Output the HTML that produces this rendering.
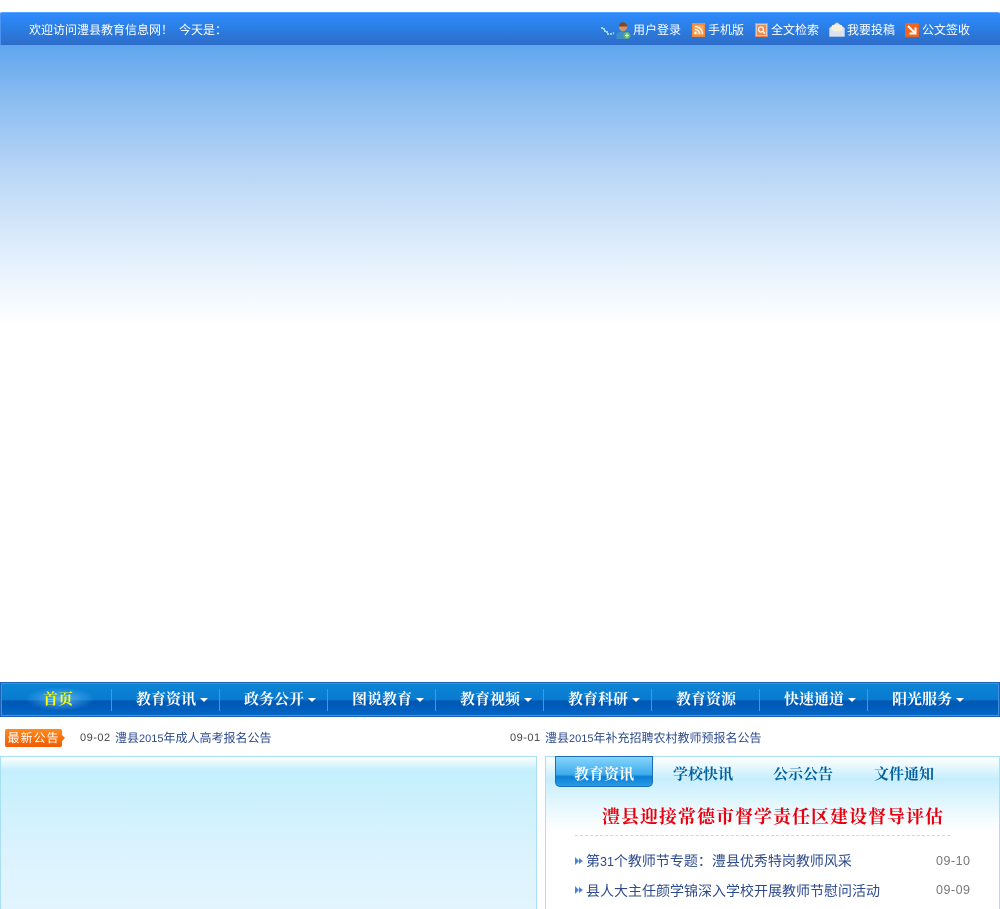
<!DOCTYPE html>
<html lang="zh"><head><meta charset="utf-8"><title>澧县教育信息网</title>
<style>
*{margin:0;padding:0;box-sizing:border-box}
html,body{width:1000px;height:909px;overflow:hidden;background:#fff}
body{position:relative;font:12px/16px "Liberation Sans","WenQuanYi Zen Hei","Noto Sans CJK SC",sans-serif;color:#333}
.a{position:absolute;white-space:nowrap}
#hero{left:0;top:45px;width:1000px;height:282px;background:linear-gradient(#5fa6ee 0,#8cbdf1 20%,#b9d6f6 45%,#dcebfb 70%,#f4f9fe 90%,#fff 100%)}
#top{left:0;top:12px;width:1000px;height:33px;background:linear-gradient(#2f8bff 0,#2b7fe6 45%,#2d6cc8 100%);border-top:1px solid #55a5ff;border-left:1px solid #4a95f0;border-radius:2px 2px 0 0}
.w{color:#fff}
#nav{left:0;top:682px;width:1000px;height:35px;border:1px solid #1e62b5;background:linear-gradient(#0a85d6 0,#0a7bd0 50%,#0056b4 55%,#0061be 85%,#0a6cc8 100%);box-shadow:inset 0 0 0 1px #3f90de}
#glow{left:25px;top:687px;width:70px;height:24px;background:radial-gradient(ellipse at center,rgba(110,195,255,.75),rgba(80,170,255,0) 70%)}
.n{top:691px;height:18px;font:bold 15px/18px "Liberation Serif","Noto Serif CJK SC",serif;color:#fff}
.sep{top:689px;width:1px;height:22px;background:#4f93dd}
.tri{top:698px;width:0;height:0;border-left:4px solid transparent;border-right:4px solid transparent;border-top:4px solid #fff}
#badge{left:5px;top:729px;width:57px;height:18px;background:linear-gradient(#ff8a1c,#f25a00);border-radius:2px;color:#fff;font:12px/18px "Liberation Sans","WenQuanYi Zen Hei",sans-serif;text-align:center;letter-spacing:1px}
#badgeT{left:62px;top:735px;border-left:3px solid #f5700a;border-top:3px solid transparent;border-bottom:3px solid transparent}
.d{font:11px/16px "Liberation Sans",sans-serif;letter-spacing:.5px;color:#444}
.m10{font-size:11px}
.b{color:#2c4a8c}
#left{left:0;top:756px;width:537px;height:153px;border:1px solid #a9dff3;border-bottom:0;background:linear-gradient(#fff 0,#c5effd 13px,#c7f0fd 25px,#dcf3fe 100px,#e2f5fe 153px)}
#right{left:545px;top:756px;width:455px;height:153px;border:1px solid #a9dff3;border-bottom:0;background:linear-gradient(#fff 0,#c6eefd 22px,#d5f3fd 35px,#f2fbfe 60px,#fff 75px)}
#tab{left:555px;top:756px;width:98px;height:31px;border:1px solid #1a6db8;border-top-width:1px;border-radius:0 0 5px 5px;background:linear-gradient(#86d5fb 0,#3eaaec 60%,#0a7fd4 68%,#2a9be6 100%)}
.t{top:766px;font:bold 15px/18px "Liberation Serif","Noto Serif CJK SC",serif;color:#00609f}
#h{left:602px;top:806px;font:bold 18px/22px "Liberation Serif","Noto Serif CJK SC",serif;color:#e8000e}
#dash{left:575px;top:835px;width:375px;border-top:1px dashed #d5d5d5}
.arr{left:575px;width:8px;height:8px}
.l{left:586px;font-size:14px;line-height:18px;color:#2c4a8c}
.m12{font-size:12.5px}
.dt{left:936px;font:12.5px/18px "Liberation Sans",sans-serif;letter-spacing:.5px;color:#777}
</style></head><body>
<div class="a" id="hero"></div>
<div class="a" id="top"></div>
<div class="a w" style="left:29px;top:22px">欢迎访问澧县教育信息网！</div>
<div class="a w" style="left:179px;top:22px">今天是：</div>

<svg class="a" style="left:600px;top:21px" width="32" height="19" viewBox="0 0 32 19">
<path d="M1 7h3v3h3v3h4l3-1" stroke="#9fd6ea" stroke-width="2" fill="none" stroke-dasharray="2 1"/>
<circle cx="23" cy="6" r="4.200" fill="#d09468"/><path d="M18.800 5.500a4.200 4.200 0 0 1 8.400 0z" fill="#7d4a22"/>
<path d="M16.500 18v-4c0-2 2.500-3.500 6-3.500s6 1.500 6 3.500v4z" fill="#3f8fc4"/><circle cx="27" cy="14.500" r="3.500" fill="#5fb56a"/><path d="M25 14.500h4M27 12.500v4" stroke="#fff"/>
</svg>
<div class="a w" style="left:633px;top:22px">用户登录</div>
<svg class="a" style="left:692px;top:23px" width="13" height="14" viewBox="0 0 13 14"><rect width="13" height="14" fill="#f08a3c"/><rect x="1.500" y="2" width="10" height="10" fill="#f6a860"/><circle cx="3.500" cy="10" r="1.200" fill="#fff"/><path d="M3 6.500a4.500 4.500 0 0 1 4.500 4.500M3 3.500a7.500 7.500 0 0 1 7.500 7.500" stroke="#fff" stroke-width="1.300" fill="none"/></svg>
<div class="a w" style="left:708px;top:22px">手机版</div>
<svg class="a" style="left:755px;top:23px" width="13" height="14" viewBox="0 0 13 14"><rect width="13" height="14" fill="#f2854a"/><rect x="1" y="1" width="11" height="12" fill="#e8c4ad"/><rect x="2" y="2" width="9" height="10" fill="#f28a50"/><circle cx="6" cy="6.500" r="2.500" fill="none" stroke="#fff" stroke-width="1.300"/><path d="M8 8.500l2 2" stroke="#fff" stroke-width="1.500"/></svg>
<div class="a w" style="left:771px;top:22px">全文检索</div>
<svg class="a" style="left:829px;top:22px" width="16" height="15" viewBox="0 0 16 15"><path d="M0.500 6L8 0.500 15.500 6V14.500H.5z" fill="#e6e6ea" stroke="#b8c8d8" stroke-width=".5"/><rect x="3" y="3" width="10" height="6" fill="#f6f0d8"/><path d="M.5 6l7.500 5 7.500-5V14.500H.5z" fill="#dde3ee"/></svg>
<div class="a w" style="left:847px;top:22px">我要投稿</div>
<svg class="a" style="left:905px;top:23px" width="14" height="14" viewBox="0 0 14 14"><rect width="14" height="14" rx="1" fill="#f0641e"/><path d="M3 3l7 7M10.500 4.500v6h-6" stroke="#fff" stroke-width="2" fill="none"/></svg>
<div class="a w" style="left:922px;top:22px">公文签收</div>

<div class="a" id="nav"></div>
<div class="a" id="glow"></div>
<div class="a n" style="left:43px;color:#ff0">首页</div>
<div class="a sep" style="left:111px"></div>
<div class="a n" style="left:136px">教育资讯</div><div class="a tri" style="left:200px"></div>
<div class="a sep" style="left:219px"></div>
<div class="a n" style="left:244px">政务公开</div><div class="a tri" style="left:308px"></div>
<div class="a sep" style="left:327px"></div>
<div class="a n" style="left:352px">图说教育</div><div class="a tri" style="left:416px"></div>
<div class="a sep" style="left:435px"></div>
<div class="a n" style="left:460px">教育视频</div><div class="a tri" style="left:524px"></div>
<div class="a sep" style="left:543px"></div>
<div class="a n" style="left:568px">教育科研</div><div class="a tri" style="left:632px"></div>
<div class="a sep" style="left:651px"></div>
<div class="a n" style="left:676px">教育资源</div>
<div class="a sep" style="left:759px"></div>
<div class="a n" style="left:784px">快速通道</div><div class="a tri" style="left:848px"></div>
<div class="a sep" style="left:867px"></div>
<div class="a n" style="left:892px">阳光服务</div><div class="a tri" style="left:956px"></div>

<div class="a" id="badge">最新公告</div><div class="a" id="badgeT"></div>
<div class="a d" style="left:80px;top:730px">09-02</div>
<div class="a b" style="left:115px;top:730px">澧县<span class="m10">2015</span>年成人高考报名公告</div>
<div class="a d" style="left:510px;top:730px">09-01</div>
<div class="a b" style="left:545px;top:730px">澧县<span class="m10">2015</span>年补充招聘农村教师预报名公告</div>

<div class="a" id="left"></div>
<div class="a" id="right"></div>
<div class="a" id="tab"></div>
<div class="a t" style="left:574px;color:#fff">教育资讯</div>
<div class="a t" style="left:673px">学校快讯</div>
<div class="a t" style="left:773px">公示公告</div>
<div class="a t" style="left:874px">文件通知</div>
<div class="a" id="h" style="letter-spacing:1px">澧县迎接常德市督学责任区建设督导评估</div>
<div class="a" id="dash"></div>
<svg class="a arr" style="top:857px" viewBox="0 0 8 8"><path d="M0 0l4 4-4 4zM4 1l4 3-4 3z" fill="#4a86d8"/></svg>
<div class="a l" style="top:852px">第<span class="m12">31</span>个教师节专题：澧县优秀特岗教师风采</div>
<div class="a dt" style="top:852px">09-10</div>
<svg class="a arr" style="top:886px" viewBox="0 0 8 8"><path d="M0 0l4 4-4 4zM4 1l4 3-4 3z" fill="#4a86d8"/></svg>
<div class="a l" style="top:882px">县人大主任颜学锦深入学校开展教师节慰问活动</div>
<div class="a dt" style="top:881px">09-09</div>
</body></html>
